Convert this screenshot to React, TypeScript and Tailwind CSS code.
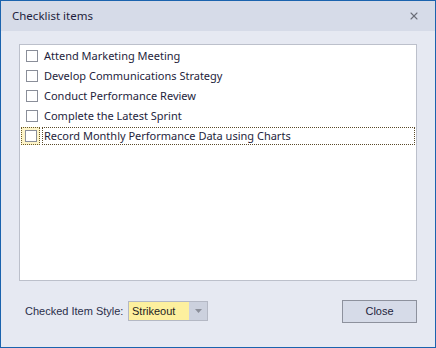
import { X } from "lucide-react";

const items = [
  "Attend Marketing Meeting",
  "Develop Communications Strategy",
  "Conduct Performance Review",
  "Complete the Latest Sprint",
  "Record Monthly Performance Data using Charts",
];

export default function App() {
  return (
    <div
      className="flex h-[348px] w-[436px] flex-col border border-[#1b63ae] bg-[#e6e9f2] text-[11px] text-[#1e1e3c]"
      style={{ fontFamily: '"Noto Sans", "Segoe UI", sans-serif' }}
    >
      <div className="flex h-[30px] shrink-0 items-center justify-between bg-[#d6dbe8] pl-[11px] pr-[15px]">
        <span className="text-[11.5px] text-[#1e1e3c]">Checklist items</span>
        <X className="h-[12px] w-[12px] text-[#6b6e78]" strokeWidth={2.2} />
      </div>

      <div className="flex flex-1 flex-col px-[18px] pt-[13px]">
        <div className="h-[237px] border border-[#bcc0cb] bg-white p-[1px]">
          {items.map((text, i) => {
            const focused = i === items.length - 1;
            return (
              <div
                key={text}
                className={`flex h-[20px] items-center ${focused ? "" : "pl-[5px]"}`}
              >
                {focused ? (
                  <>
                    <div className="flex h-[18px] w-[19px] items-center justify-center border border-dotted border-[#6b5a2a] bg-[#fdf4c8]">
                      <div className="h-[12px] w-[12px] border border-[#8a8e99] bg-white" />
                    </div>
                    <div className="ml-[2px] flex h-[18px] flex-1 items-center border border-dotted border-[#5a4a2a] pl-[1px]">
                      {text}
                    </div>
                  </>
                ) : (
                  <>
                    <div className="h-[12px] w-[12px] border border-[#8a8e99] bg-white" />
                    <span className="ml-[6px]">{text}</span>
                  </>
                )}
              </div>
            );
          })}
        </div>

        <div
          className="mt-[19px] flex items-start justify-between pl-[6px]"
          style={{ fontFamily: '"Liberation Sans", Arial, sans-serif' }}
        >
          <div className="flex items-center pt-[1px]">
            <span className="w-[103px] text-[#2a2f4a]">Checked Item Style:</span>
            <div className="flex h-[20px] w-[80px] border border-[#b4b8c4] bg-[#fdf09e]">
              <span className="flex-1 pl-[3px] leading-[18px] text-[#1e1e1e]">Strikeout</span>
              <div className="flex w-[18px] items-center justify-center bg-[#ccd1de]">
                <svg width="7" height="4" viewBox="0 0 7 4">
                  <path d="M0 0h7L3.5 4z" fill="#8b8f99" />
                </svg>
              </div>
            </div>
          </div>
          <button className="h-[23px] w-[75px] border border-[#8d919d] bg-[#d6dbe8] text-[#1e1e3c]">
            Close
          </button>
        </div>
      </div>
    </div>
  );
}
